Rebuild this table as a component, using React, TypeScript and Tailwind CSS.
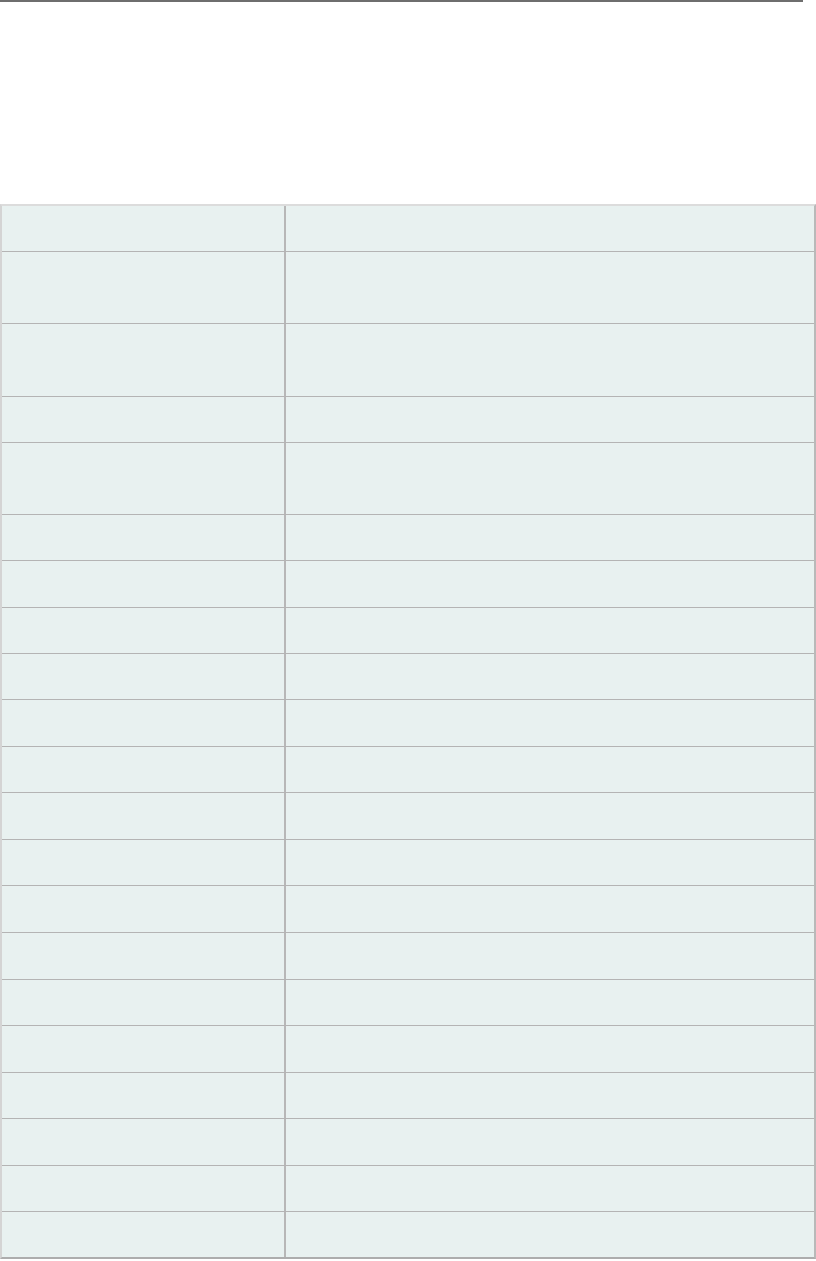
const rowHeights = [
  "h-[46px]",
  "h-[72px]",
  "h-[73px]",
  "h-[46px]",
  "h-[72px]",
  "h-[46px]",
  "h-[47px]",
  "h-[46px]",
  "h-[46px]",
  "h-[47px]",
  "h-[46px]",
  "h-[47px]",
  "h-[46px]",
  "h-[47px]",
  "h-[47px]",
  "h-[46px]",
  "h-[47px]",
  "h-[46px]",
  "h-[47px]",
  "h-[46px]",
  "h-[45px]",
];

const App = () => {
  return (
    <div className="w-[816px] min-h-[1261px] bg-white font-['Liberation_Sans',sans-serif]">
      <div className="w-[803px] h-[2px] bg-[#6e6e6e]" />
      <div className="mt-[202px] w-[816px] border-2 border-t-[#dcdcdc] border-l-[#d4d4d4] border-r-[#b9b9b9] border-b-[#adadad] bg-[#e8f1f0]">
        {rowHeights.map((h, i) => (
          <div
            key={i}
            className={`flex ${h} ${
              i < rowHeights.length - 1 ? "border-b border-[#b4b4b4]" : ""
            }`}
          >
            <div className="w-[284px] shrink-0 border-r-2 border-[#b7b7b7]" />
            <div className="flex-1" />
          </div>
        ))}
      </div>
    </div>
  );
};

export default App;
